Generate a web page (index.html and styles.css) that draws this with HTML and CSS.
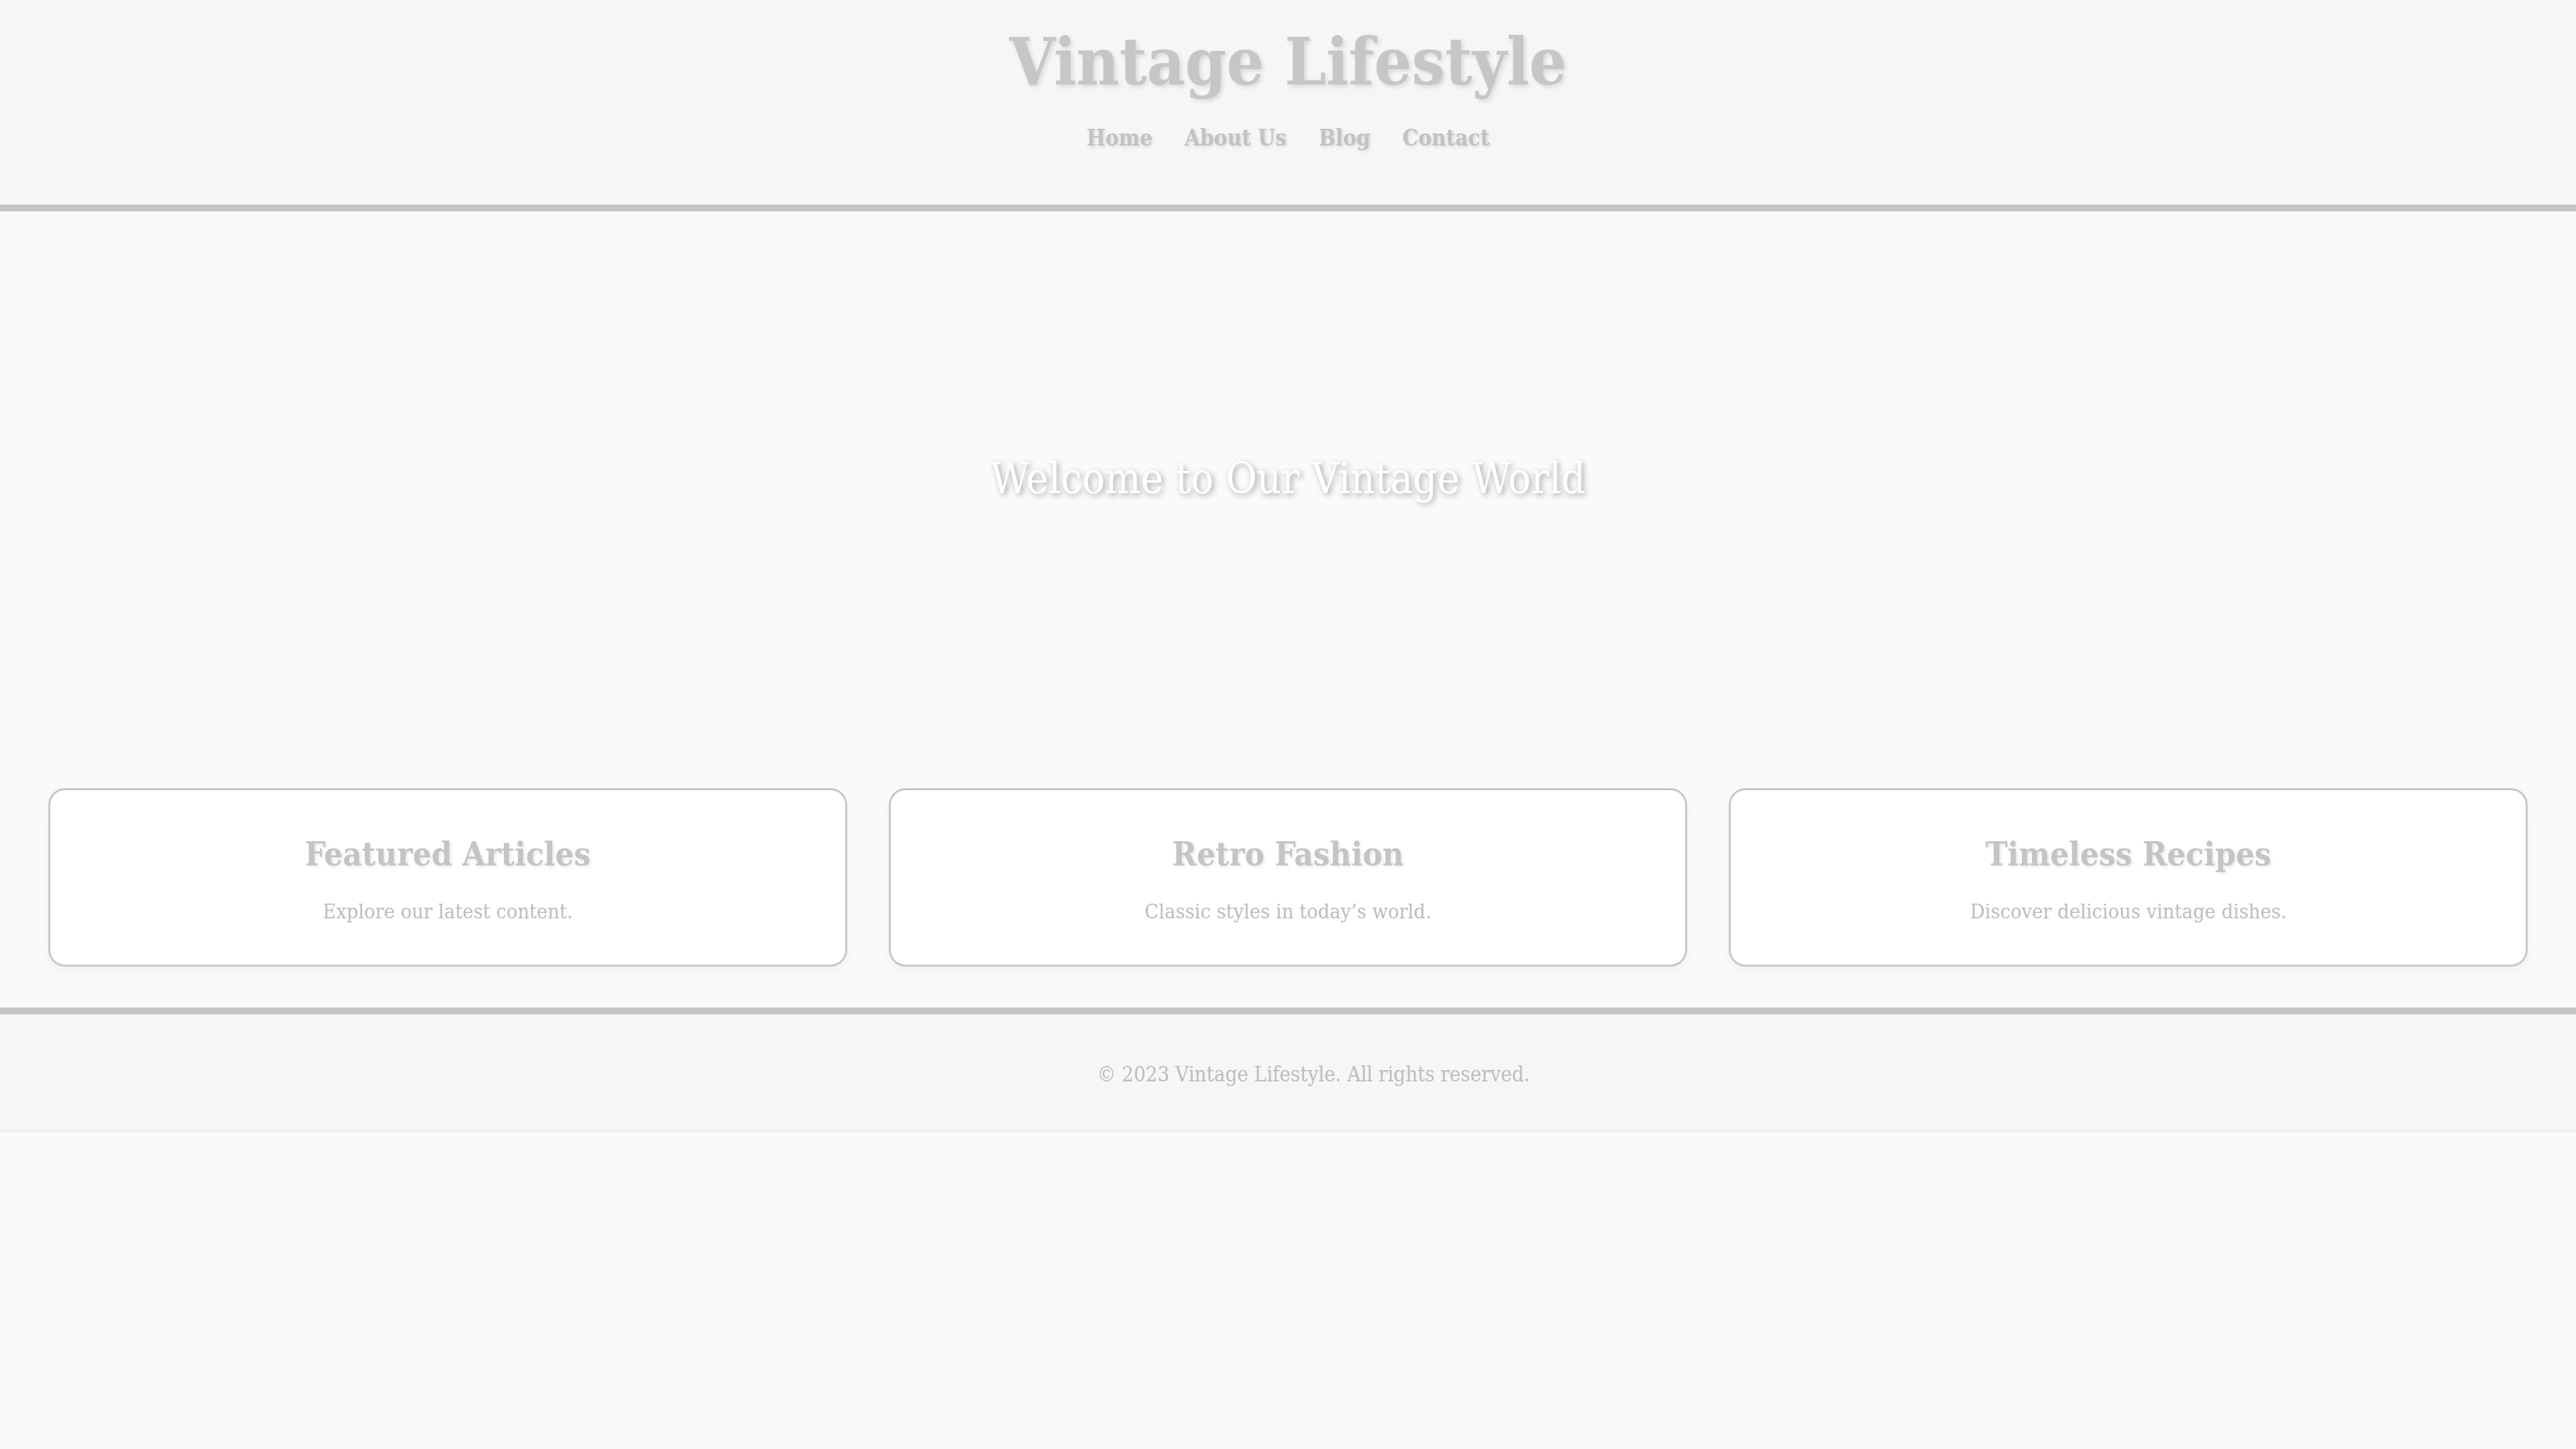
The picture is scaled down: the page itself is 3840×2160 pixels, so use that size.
FILE: index.html
```html
<!DOCTYPE html>
<html lang="en">
<head>
<meta charset="utf-8">
<title>Vintage Lifestyle</title>
<link rel="stylesheet" href="styles.css">
</head>
<body>
<header class="site-header">
  <h1 class="site-title">Vintage Lifestyle</h1>
  <nav class="site-nav">
    <a href="#">Home</a>
    <a href="#">About Us</a>
    <a href="#">Blog</a>
    <a href="#">Contact</a>
  </nav>
</header>
<section class="hero">
  <h2 class="hero-title">Welcome to Our Vintage World</h2>
</section>
<section class="cards">
  <div class="card">
    <h3 class="card-title">Featured Articles</h3>
    <p class="card-text">Explore our latest content.</p>
  </div>
  <div class="card">
    <h3 class="card-title">Retro Fashion</h3>
    <p class="card-text">Classic styles in today’s world.</p>
  </div>
  <div class="card">
    <h3 class="card-title">Timeless Recipes</h3>
    <p class="card-text">Discover delicious vintage dishes.</p>
  </div>
</section>
<footer class="site-footer">
  <p class="footer-text">© 2023 Vintage Lifestyle. All rights reserved.</p>
</footer>
</body>
</html>
```

FILE: styles.css
```css
* { box-sizing: border-box; }
html, body { margin: 0; padding: 0; }
body {
  background: #fafafa;
  font-family: Georgia, "DejaVu Serif", serif;
  font-stretch: condensed;
  color: #c4c4c4;
}
.site-header {
  background: #f6f6f6;
  border-bottom: 10px solid #c4c4c4;
  padding: 29px 0 80px;
  text-align: center;
}
.site-title {
  margin: 0;
  font-size: 98px;
  line-height: 126px;
  font-weight: bold;
  color: #c6c6c6;
  text-shadow: 3px 3px 6px rgba(0,0,0,0.12);
}
.site-nav {
  margin-top: 32px;
  display: flex;
  justify-content: center;
  gap: 48px;
}
.site-nav a {
  font-size: 33px;
  line-height: 38px;
  font-weight: bold;
  color: #c2c2c2;
  text-decoration: none;
  text-shadow: 2px 2px 4px rgba(0,0,0,0.12);
}
.hero {
  height: 796px;
  display: flex;
  align-items: center;
  justify-content: center;
}
.hero-title {
  margin: 0;
  font-size: 63px;
  font-weight: normal;
  color: #ffffff;
  text-shadow: 3px 3px 8px rgba(0,0,0,0.35);
}
.cards {
  display: grid;
  grid-template-columns: repeat(3, 1fr);
  gap: 62px;
  padding: 64px 72px 61px;
}
.card {
  background: #ffffff;
  border: 3px solid #c8c8c8;
  border-radius: 25px;
  box-shadow: 0 8px 20px rgba(0,0,0,0.04);
  padding: 63px 25px 58px;
  text-align: center;
}
.card-title {
  margin: 0;
  font-size: 49px;
  line-height: 65px;
  font-weight: bold;
  color: #c4c4c4;
  text-shadow: 2px 2px 4px rgba(0,0,0,0.1);
}
.card-text {
  margin: 32px 0 0;
  font-size: 30.5px;
  line-height: 42px;
  color: #bdbdbd;
}
.site-footer {
  background: #f6f6f6;
  border-top: 10px solid #c4c4c4;
  border-bottom: 2px solid #ececec;
  padding: 68px 0 63px 76px;
  text-align: center;
}
.footer-text {
  margin: 0;
  font-size: 31px;
  line-height: 42px;
  color: #bdbdbd;
}
```
